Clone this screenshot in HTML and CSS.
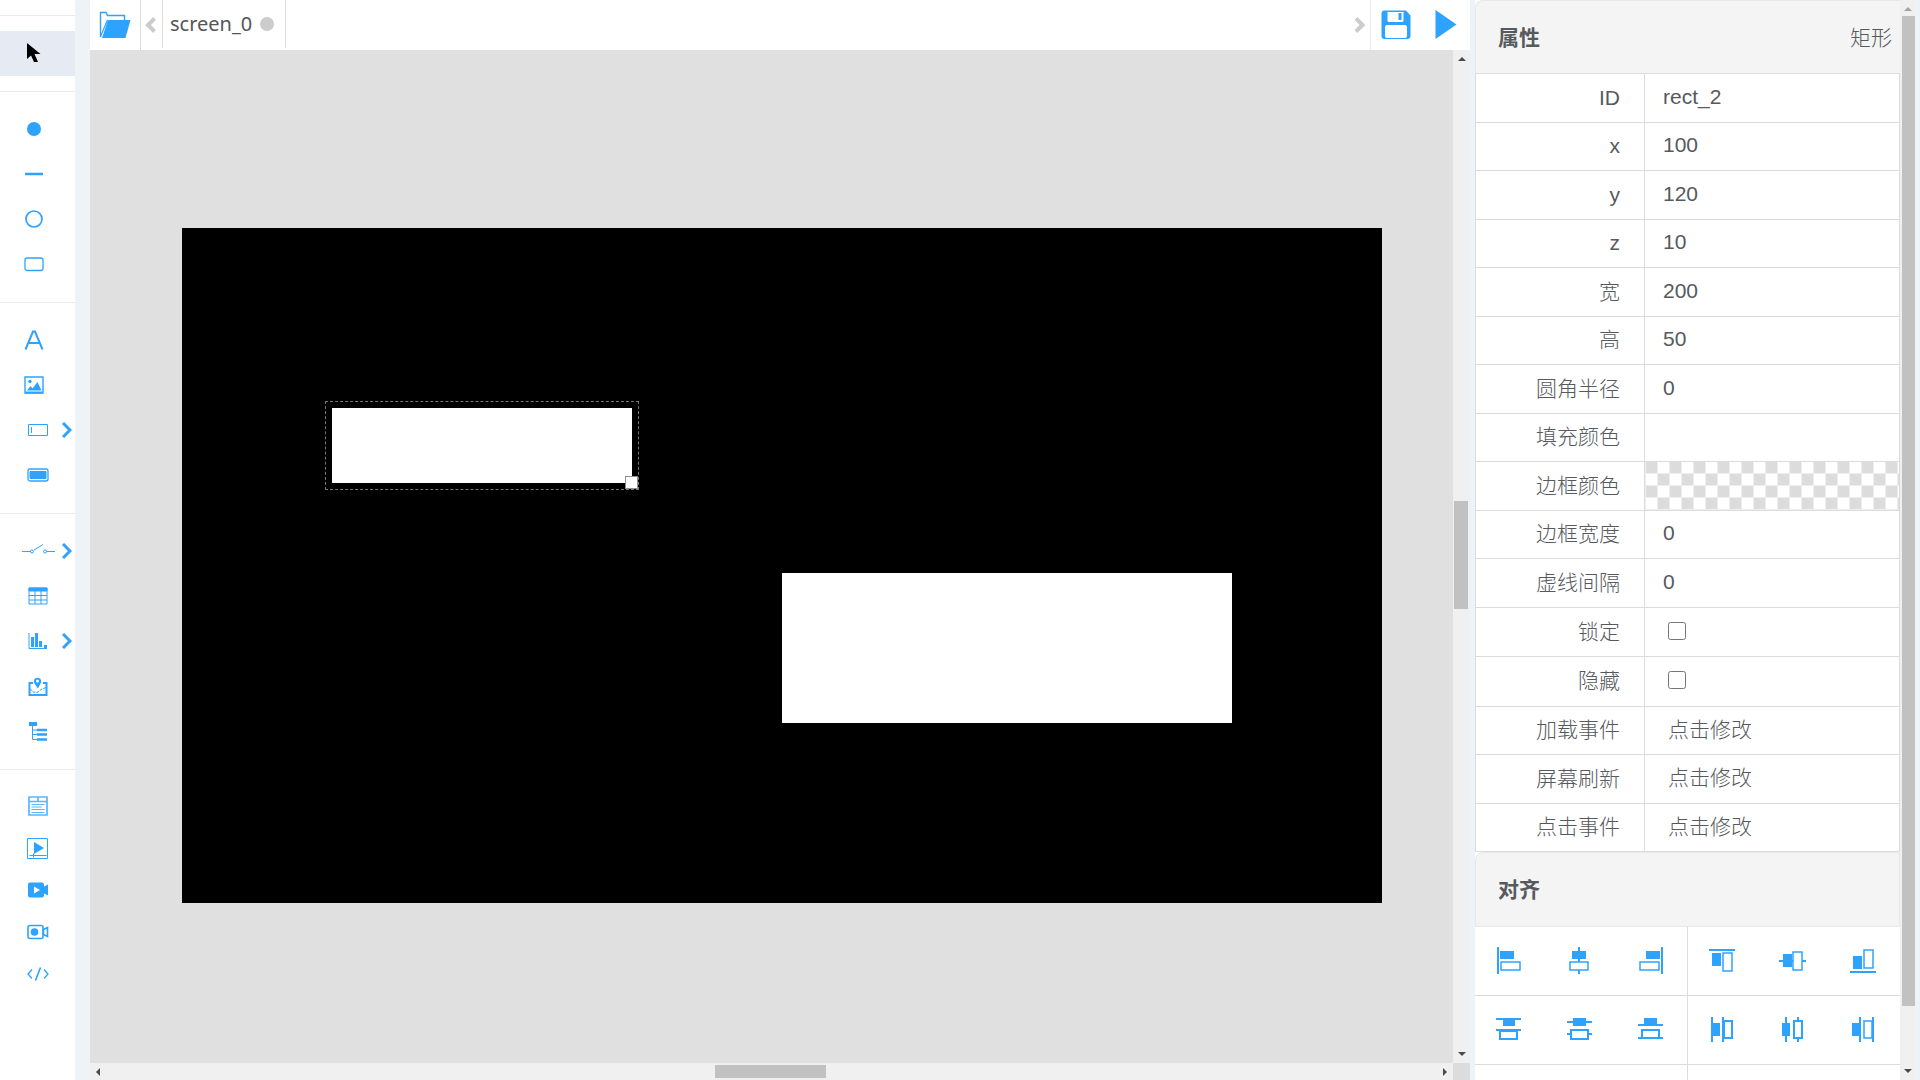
FILE: index.html
```html
<!DOCTYPE html>
<html lang="zh-CN">
<head>
<meta charset="utf-8">
<title>screen_0</title>
<link rel="stylesheet" href="styles.css">
</head>
<body>
<div class="app">
  <nav class="tools" aria-label="工具">
    <div class="tool-group narrow">
      <button class="tool active" aria-label="选择"><svg width="20" height="24" viewBox="0 0 20 24"><path d="M3 2v16l4-3.500 3 6.500h4l-3.500-8h6z" fill="#000" stroke="none"/></svg></button>
    </div>
    <div class="tool-group narrow">
      <button class="tool" aria-label="点"><svg width="20" height="20"><circle cx="10" cy="10" r="7" fill="currentColor" stroke="none"/></svg></button>
      <button class="tool" aria-label="线"><svg width="20" height="20"><path d="M1 10h18" stroke-width="2.500"/></svg></button>
      <button class="tool" aria-label="圆"><svg width="20" height="20"><circle cx="10" cy="10" r="8" stroke-width="1.700"/></svg></button>
      <button class="tool" aria-label="矩形"><svg width="20" height="20"><rect x="1" y="4" width="18" height="12.500" rx="2" stroke-width="1.300"/></svg></button>
    </div>
    <div class="tool-group">
      <button class="tool shift" aria-label="文字"><svg width="20" height="20"><path d="M1.500 19.500L9 1.500h2l7.500 18M5 13h10" stroke-width="2"/></svg></button>
      <button class="tool shift" aria-label="图片"><svg width="20" height="20"><path d="M1 2h18v16H1z" stroke-width="1.400"/><path d="M1 17.500h18" stroke-width="2"/><circle cx="6" cy="6.500" r="1.700" fill="currentColor" stroke="none"/><path d="M3 15.500l3.500-4.500 2 2.500L13.500 7l4 8.500z" fill="currentColor" stroke="none"/></svg></button>
      <button class="tool" aria-label="输入框"><svg width="20" height="20"><path d="M.5 4.500h19v11H.5zM3.500 7v6"/></svg><svg class="more" width="10" height="16"><path d="M1 1l7 7-7 7"/></svg></button>
      <button class="tool" aria-label="按钮"><svg width="22" height="20"><rect x="1" y="4" width="20" height="12" rx="2" stroke-width="1.300"/><path d="M3 6.500h16v7H3z" fill="currentColor"/></svg></button>
    </div>
    <div class="tool-group">
      <button class="tool" aria-label="开关"><svg width="34" height="20"><path d="M1 10.500h9M13 9l9-5.500M25.500 10.500H34"/><circle cx="11" cy="10.500" r="1.500"/><circle cx="24" cy="10.500" r="1.500"/></svg><svg class="more" width="10" height="16"><path d="M1 1l7 7-7 7"/></svg></button>
      <button class="tool" aria-label="表格"><svg width="20" height="18"><path d="M1 1h18v16H1zM1 8.500h18M1 13h18M7 4v13M13 4v13"/><path d="M1 1h18v3H1z" fill="currentColor"/></svg></button>
      <button class="tool" aria-label="图表"><svg width="20" height="18"><path d="M1 1v15.500h18"/><path d="M3 5h3v10H3zM7 1h3v14H7zM11 9h3v6h-3zM16 13h3v3h-3z" fill="currentColor" stroke="none"/></svg><svg class="more" width="10" height="16"><path d="M1 1l7 7-7 7"/></svg></button>
      <button class="tool" aria-label="地图"><svg width="20" height="22"><path d="M5 8H1.500v12h17V8H15" stroke-width="2"/><path d="M10 13.500C7 10 5.800 8 5.800 5.800a3.800 3.800 0 0 1 7.400 0c0 2.200-1.200 4.200-3.200 7.700z" fill="currentColor" stroke="none"/><circle cx="9.500" cy="6" r="1.500" fill="#fff" stroke="none"/><path d="M2 13.500l3 3.500 4 .5 5-3.500 4-1.500" stroke-dasharray="3 1"/></svg></button>
      <button class="tool" aria-label="树"><svg width="20" height="20"><path d="M1 1h8v4H1z" fill="currentColor" stroke="none"/><path d="M4.500 4v14.500H10M4.500 9H10M4.500 13.500H10"/><path d="M9 9h10M9 13.500h10M9 18.500h10" stroke-width="2.600"/></svg></button>
    </div>
    <div class="tool-group compact">
      <button class="tool" aria-label="面板"><svg width="20" height="20"><path d="M1 1h18v18H1zM1 5.500h18M10 1v4" stroke-width="1.700" opacity=".8"/><path d="M3.500 8.500h13M3.500 11h10M3.500 13.500h13M3.500 16.500h13" opacity=".8"/></svg></button>
      <button class="tool" aria-label="播放器"><svg width="22" height="22"><path d="M.5 1.500h20v20H.5z"/><path d="M7 5l10 6-10 6z" fill="currentColor" stroke="none"/><path d="M2.500 18.500h17M6.500 16.500v4"/></svg></button>
      <button class="tool" aria-label="视频"><svg width="22" height="18"><path d="M3 1.500h12q2 0 2 2v2l4-2v11l-4-2v2q0 2-2 2H3q-2 0-2-2v-11q0-2 2-2z" fill="currentColor" stroke="none"/><path d="M7 5.500l6 3.500-6 3.500z" fill="#fff" stroke="none"/></svg></button>
      <button class="tool" aria-label="摄像头"><svg width="22" height="18"><rect x="1" y="2.500" width="15" height="13" rx="2" stroke-width="1.600"/><circle cx="7.500" cy="9" r="3.800" fill="currentColor" stroke="none"/><path d="M16.500 6.500l4-2v9l-4-2z" stroke-width="1.600"/></svg></button>
      <button class="tool" aria-label="代码"><svg width="22" height="18"><path d="M5 4.500L1 9l4 4.500M17 4.500L21 9l-4 4.500" stroke-width="1.300"/><path d="M13.500 2.500L8.500 15.500" stroke-width="1.600"/></svg></button>
    </div>
  </nav>

  <main class="editor">
    <header class="topbar">
      <button class="open" aria-label="打开"><svg width="32" height="28" viewBox="0 0 32 28"><path d="M1.500 26V1.500H7l1.500 3h17V9" stroke-width="1.400"/><path d="M9 9h22.500l-5 18H3z" fill="currentColor" stroke="none"/><path d="M1.500 25.500L8.500 9" stroke-width="1.200"/></svg></button>
      <button class="scroll-tab first" aria-label="向左"><svg width="14" height="18"><path d="M11.500 2.500L5 9l6.500 6.500"/></svg></button>
      <a class="tab" href="#screen_0">screen_0<span class="dot"></span></a>
      <button class="scroll-tab last" aria-label="向右"><svg width="14" height="18"><path d="M3 2.500L9.500 9 3 15.500"/></svg></button>
      <button class="act save" aria-label="保存"><svg width="30" height="30" viewBox="0 0 30 30"><path d="M3 .5h22l4.500 5V26q0 3-3 3H3.500q-3 0-3-3V3.500q0-3 3-3z" fill="currentColor" stroke="none"/><path d="M6.500 2h16v8.500q0 1.500-1.500 1.500H8q-1.500 0-1.500-1.500zM4 17q0-2 2-2h18q2 0 2 2v9q0 2-2 2H6q-2 0-2-2z" fill="#fff" stroke="none"/><path d="M17.500 3h3v7h-3z" fill="currentColor" stroke="none"/></svg></button>
      <button class="act play" aria-label="运行"><svg width="22" height="30"><path d="M.5 0L21.500 14.500.5 29z" fill="currentColor" stroke="none"/></svg></button>
    </header>
    <div class="workspace">
      <div class="viewport">
        <div class="screen">
          <div class="shape rect-1"></div>
          <div class="shape rect-2"></div>
          <div class="selection"><span class="handle"></span></div>
        </div>
      </div>
      <div class="bar vertical"><i class="arrow up"></i><div class="track"><div class="thumb"></div></div><i class="arrow down"></i></div>
      <div class="bar horizontal"><i class="arrow left"></i><div class="track"><div class="thumb"></div></div><i class="arrow right"></i></div>
      <div class="corner"></div>
    </div>
  </main>

  <aside class="panel">
    <section>
      <header class="panel-head"><h2>属性</h2><span>矩形</span></header>
      <table class="props">
        <tr><th><label for="p-id">ID</label></th><td><input id="p-id" type="text" value="rect_2"></td></tr>
        <tr><th><label for="p-x">x</label></th><td><input id="p-x" type="text" value="100"></td></tr>
        <tr><th><label for="p-y">y</label></th><td><input id="p-y" type="text" value="120"></td></tr>
        <tr><th><label for="p-z">z</label></th><td><input id="p-z" type="text" value="10"></td></tr>
        <tr><th><label for="p-w">宽</label></th><td><input id="p-w" type="text" value="200"></td></tr>
        <tr><th><label for="p-h">高</label></th><td><input id="p-h" type="text" value="50"></td></tr>
        <tr><th><label for="p-r">圆角半径</label></th><td><input id="p-r" type="text" value="0"></td></tr>
        <tr><th><label for="p-fill">填充颜色</label></th><td><button id="p-fill" class="swatch"></button></td></tr>
        <tr><th><label for="p-stroke">边框颜色</label></th><td><button id="p-stroke" class="swatch clear"></button></td></tr>
        <tr><th><label for="p-bw">边框宽度</label></th><td><input id="p-bw" type="text" value="0"></td></tr>
        <tr><th><label for="p-dash">虚线间隔</label></th><td><input id="p-dash" type="text" value="0"></td></tr>
        <tr class="toggle"><th><label for="p-lock">锁定</label></th><td><input id="p-lock" type="checkbox"></td></tr>
        <tr class="toggle"><th><label for="p-hide">隐藏</label></th><td><input id="p-hide" type="checkbox"></td></tr>
        <tr><th><label for="p-load">加载事件</label></th><td><button id="p-load" class="edit">点击修改</button></td></tr>
        <tr><th><label for="p-fresh">屏幕刷新</label></th><td><button id="p-fresh" class="edit">点击修改</button></td></tr>
        <tr><th><label for="p-click">点击事件</label></th><td><button id="p-click" class="edit">点击修改</button></td></tr>
      </table>
    </section>
    <section>
      <header class="panel-head align-head"><h2>对齐</h2></header>
      <div class="align">
        <div class="cell">
          <button aria-label="左对齐"><svg width="28" height="28"><path d="M4 0v27" stroke-width="2"/><path d="M6 4h14v8H6z" fill="currentColor" stroke="none"/><path d="M7 15h19v8H7z"/></svg></button>
          <button aria-label="水平居中"><svg width="28" height="28"><path d="M14 0v15M14 23v4" stroke-width="2"/><path d="M7 4h14v8H7z" fill="currentColor" stroke="none"/><path d="M5 15h18v8H5z"/></svg></button>
          <button aria-label="右对齐"><svg width="28" height="28"><path d="M26 0v27" stroke-width="2"/><path d="M10 4h14v8H10z" fill="currentColor" stroke="none"/><path d="M4 15h19v8H4z"/></svg></button>
        </div>
        <div class="cell">
          <button aria-label="顶对齐"><svg width="28" height="28"><path d="M0 3h26" stroke-width="2"/><path d="M3 6h9v13H3z" fill="currentColor" stroke="none"/><path d="M14 6h9v18h-9z"/></svg></button>
          <button aria-label="垂直居中"><svg width="28" height="28"><path d="M0 14h14M23 14h4" stroke-width="2"/><path d="M4 7h9v13H4z" fill="currentColor" stroke="none"/><path d="M14 5h9v18h-9z"/></svg></button>
          <button aria-label="底对齐"><svg width="28" height="28"><path d="M1 25h26" stroke-width="2"/><path d="M4 9h9v13H4z" fill="currentColor" stroke="none"/><path d="M15 3h9v18h-9z"/></svg></button>
        </div>
        <div class="cell">
          <button aria-label="顶部分布"><svg width="28" height="28"><path d="M2 3h25M2 14h25" stroke-width="2"/><path d="M9 3h12v7H9z" fill="currentColor" stroke="none"/><path d="M6 15h17v8H6z" stroke-width="2"/></svg></button>
          <button aria-label="垂直分布"><svg width="28" height="28"><path d="M2 6h25M2 18h3M23 18h4" stroke-width="2"/><path d="M8 2h13v8H8z" fill="currentColor" stroke="none"/><path d="M6 14h17v9H6z" stroke-width="2"/></svg></button>
          <button aria-label="底部分布"><svg width="28" height="28"><path d="M2 9h25M2 22h25" stroke-width="2"/><path d="M8 2h13v7H8z" fill="currentColor" stroke="none"/><path d="M6 14h17v8H6z" stroke-width="2"/></svg></button>
        </div>
        <div class="cell">
          <button aria-label="左侧分布"><svg width="28" height="28"><path d="M3 1v25M14 1v25" stroke-width="2"/><path d="M3 7h8v13H3z" fill="currentColor" stroke="none"/><path d="M15 5h8v17h-8z" stroke-width="2"/></svg></button>
          <button aria-label="水平分布"><svg width="28" height="28"><path d="M7 1v25M19 1v4M19 22v4" stroke-width="2"/><path d="M3 7h8v13H3z" fill="currentColor" stroke="none"/><path d="M15 5h8v17h-8z" stroke-width="2"/></svg></button>
          <button aria-label="右侧分布"><svg width="28" height="28"><path d="M11 1v25M24 1v25" stroke-width="2"/><path d="M3 7h8v13H3z" fill="currentColor" stroke="none"/><path d="M15 5h8v17h-8z" stroke-width="1.500"/></svg></button>
        </div>
        <div class="cell"></div>
        <div class="cell"></div>
      </div>
    </section>
  </aside>
  <div class="bar vertical page-bar"><i class="arrow up"></i><div class="track"><div class="thumb"></div></div><i class="arrow down"></i></div>
</div>
</body>
</html>
```
FILE: styles.css
```css
* { box-sizing: border-box; }

body {
  margin: 0;
  background: #eef3f7;
  color: #56595d;
  font: 300 21px/30px "Liberation Sans", "Noto Sans CJK SC", sans-serif;
}

button {
  padding: 0;
  border: 0;
  background: none;
  color: inherit;
  font: inherit;
  cursor: pointer;
}

svg {
  display: block;
  fill: none;
  stroke: currentColor;
}

.app {
  display: flex;
  height: 100vh;
  padding-right: 5px;
  overflow: hidden;
}

/* Tool column */
.tools {
  flex: 0 0 75px;
  margin-right: 15px;
  padding-top: 15px;
  background: #fff;
  color: #2ea2ff;
}

.tool-group {
  padding: 15px 0;
  border-top: 1px solid #ebebeb;
}

.tool {
  position: relative;
  display: flex;
  align-items: center;
  justify-content: center;
  width: 100%;
  height: 45px;
  padding-bottom: 2px;
}

.compact .tool {
  height: 42px;
  padding-bottom: 0;
}

.narrow .tool,
.tool.shift { padding-right: 8px; }

.tool.active { background: #e6eaf3; }

.more {
  position: absolute;
  right: 3px;
  stroke-width: 3;
}

/* Editor */
.editor {
  display: flex;
  flex: 1;
  flex-direction: column;
  min-width: 0;
}

.topbar {
  display: flex;
  align-items: center;
  height: 50px;
  background: #fff;
  color: #2ea2ff;
}

.open {
  display: flex;
  align-items: center;
  justify-content: center;
  width: 51px;
  height: 50px;
  border-right: 1px solid #dcdcdc;
}

.scroll-tab {
  display: flex;
  align-items: center;
  justify-content: center;
  width: 21px;
  height: 50px;
  color: #ccc;
  stroke-width: 4;
}

.scroll-tab.first { padding-right: 4px; }

.scroll-tab.last {
  margin-left: auto;
  border-right: 1px solid #ebebeb;
}

.tab {
  display: flex;
  align-items: center;
  align-self: flex-start;
  gap: 8px;
  height: 48px;
  padding: 0 11px 0 7px;
  border: solid #dcdcdc;
  border-width: 0 1px;
  color: #555;
  font: 400 20px/48px "Noto Sans", sans-serif;
  text-decoration: none;
}

.dot {
  width: 14px;
  height: 14px;
  border-radius: 50%;
  background: #ccc;
}

.act { margin-left: 10px; }
.play { margin: 0 13px 0 24px; }

.workspace {
  display: grid;
  flex: 1;
  grid-template: minmax(0, 1fr) 17px / minmax(0, 1fr) 17px;
  min-height: 0;
}

.viewport {
  padding: 178px 92px;
  overflow: hidden;
  background: #e0e0e0;
}

.screen {
  position: relative;
  width: 1200px;
  height: 675px;
  background: #000;
}

.shape {
  position: absolute;
  background: #fff;
}

.rect-1 {
  left: 150px;
  top: 180px;
  width: 300px;
  height: 75px;
}

.rect-2 {
  left: 600px;
  top: 345px;
  width: 450px;
  height: 150px;
}

.selection {
  position: absolute;
  left: 143px;
  top: 173px;
  width: 314px;
  height: 89px;
  border: 1px dashed #777;
}

.handle {
  position: absolute;
  right: 0;
  bottom: 0;
  width: 13px;
  height: 13px;
  border: 1px solid #909090;
  background: #fff;
}

/* Scroll bars */
.bar {
  display: flex;
  align-items: center;
  background: #f0f0f0;
  color: #4a4a4a;
}

.vertical { flex-direction: column; }

.track {
  position: relative;
  flex: 1;
  align-self: stretch;
}

.thumb {
  position: absolute;
  background: #c1c1c1;
}

.arrow {
  width: 0;
  height: 0;
  border: 4px solid transparent;
}

.up {
  margin: 3px 0 5px;
  border-bottom-color: currentColor;
}

.down {
  margin: 7px 0 3px;
  border-top-color: currentColor;
}

.left {
  margin: 0 7px 0 2px;
  border-right-color: currentColor;
}

.right {
  margin: 0 2px 0 7px;
  border-left-color: currentColor;
}

.workspace .vertical .thumb {
  top: 44%;
  right: 2px;
  left: 1px;
  height: 108px;
  margin-top: 4px;
}

.horizontal .thumb {
  top: 2px;
  bottom: 2px;
  left: 46%;
  width: 111px;
  margin-left: -3px;
}

.page-bar {
  flex: 0 0 15px;
}

.page-bar .up { color: #a3a3a3; }

.page-bar .thumb {
  top: 0;
  right: 0;
  left: 2px;
  height: 95%;
  max-height: 990px;
}

.corner { background: #dcdcdc; }

/* Property panel */
.panel {
  flex: 0 0 425px;
  margin-left: 5px;
  overflow: hidden;
  background: #fff;
}

.panel-head {
  display: flex;
  align-items: center;
  justify-content: space-between;
  height: 73px;
  padding: 2px 8px 0 22px;
  border: solid #e6e8ea;
  border-width: 1px 0 0 1px;
  border-radius: 8px 0 0;
  background: #f4f4f4;
}

.align-head {
  height: 75px;
  padding-top: 0;
  border-width: 1px;
}

.panel-head h2 {
  margin: 0;
  font-size: 21px;
  font-weight: 700;
}

.props {
  width: 100%;
  border: solid #dcdcdc;
  border-width: 1px 1px 0;
  border-spacing: 0;
  table-layout: fixed;
}

.props th,
.props td {
  height: 49px;
  padding: 0;
  border-bottom: 1px solid #dcdcdc;
}

.props tr:nth-child(even) > * { height: 48px; }
.props .toggle > * { height: 50px; }
.props .toggle:nth-child(even) > * { height: 49px; }

.props th {
  width: 169px;
  padding-right: 24px;
  border-right: 1px solid #dcdcdc;
  font-weight: 300;
  text-align: right;
}

.props label {
  display: block;
  margin-bottom: 1px;
}

.props input[type="text"] {
  display: block;
  width: 100%;
  height: 30px;
  margin-bottom: 3px;
  padding: 0 18px;
  border: 0;
  background: none;
  color: inherit;
  font: inherit;
}

.props input[type="checkbox"] {
  display: block;
  width: 18px;
  height: 18px;
  margin: 0 23px 3px;
}

.edit {
  display: block;
  margin-bottom: 2px;
  padding: 0 23px;
}

.swatch {
  display: block;
  width: 100%;
  height: 47px;
  background: #fff;
}

.swatch.clear {
  height: 48px;
  background:
    linear-gradient(90deg, transparent 11px, #eee 11px) 1px 0 / 12px 12px,
    linear-gradient(transparent 11px, #eee 11px) 0 0 / 12px 12px,
    conic-gradient(#fff 0 25%, #dcdcdc 0 50%, #fff 0 75%, #dcdcdc 0) 1px 0 / 24px 24px;
}

/* Alignment buttons */
.align {
  display: grid;
  grid-template-columns: 1fr 1fr;
}

.cell {
  display: flex;
  align-items: center;
  justify-content: space-between;
  height: 69px;
  padding: 0 23px 0 21px;
  border-bottom: 1px solid #dcdcdc;
  color: #2ea2ff;
  stroke-width: 1.500;
}

.cell:nth-child(odd) {
  padding-left: 19px;
  border-right: 1px solid #dcdcdc;
}
```
